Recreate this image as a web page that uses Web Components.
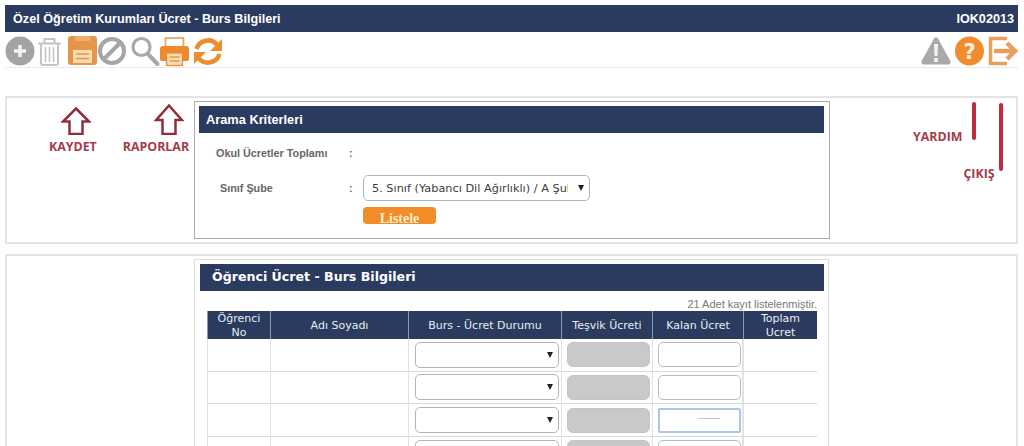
<!DOCTYPE html>
<html lang="tr">
<head>
<meta charset="utf-8">
<title>Özel Öğretim Kurumları Ücret - Burs Bilgileri</title>
<style>
  html, body { margin: 0; height: 446px; overflow: hidden; background: #fff; }
  body { padding: 5px 6px 0 5px; box-sizing: border-box; font-family: "Liberation Sans", Arial, sans-serif; }
</style>
</head>
<body>
<title-bar code="IOK02013">Özel Öğretim Kurumları Ücret - Burs Bilgileri</title-bar>
<tool-bar>
  <tool-icon name="plus"></tool-icon>
  <tool-icon name="trash" space="4"></tool-icon>
  <tool-icon name="save" space="7"></tool-icon>
  <tool-icon name="ban" space="1"></tool-icon>
  <tool-icon name="search" space="5"></tool-icon>
  <tool-icon name="print" space="1"></tool-icon>
  <tool-icon name="refresh" space="4"></tool-icon>
  <tool-icon name="warn" slot="end"></tool-icon>
  <tool-icon name="help" slot="end" space="4"></tool-icon>
  <tool-icon name="exit" slot="end" space="4"></tool-icon>
</tool-bar>
<criteria-panel></criteria-panel>
<fee-panel></fee-panel>

<script>
class TitleBar extends HTMLElement {
  constructor() {
    super();
    this.attachShadow({ mode: 'open' });
    this.shadowRoot.innerHTML = `
      <style>
        :host { display: flex; justify-content: space-between; align-items: center; height: 27px; padding: 0 4px 0 8px;
                background: #2a3b5f; color: #fff; font: bold 12.650px "Liberation Sans", Arial, sans-serif; }
      </style>
      <span><slot></slot></span>
      <span>${this.getAttribute('code')}</span>
    `;
  }
}
customElements.define('title-bar', TitleBar);

class ToolBar extends HTMLElement {
  constructor() {
    super();
    this.attachShadow({ mode: 'open' });
    this.shadowRoot.innerHTML = `
      <style>
        :host { display: flex; justify-content: space-between; align-items: flex-start; height: 31px; padding: 4px 1px 0 1px;
                border-bottom: 1px solid #e9e9e9; margin-bottom: 28px; }
        div { display: flex; }
      </style>
      <div><slot></slot></div>
      <div><slot name="end"></slot></div>
    `;
  }
}
customElements.define('tool-bar', ToolBar);

// width and inner drawing of each toolbar icon
const ICONS = {
  plus: [28, `<circle cx="14" cy="15" r="14.5" fill="#a3a3a3"/><path d="M14 9v12M8 15h12" stroke="#f2f2f2" stroke-width="3.5"/>`],
  trash: [23, `<g fill="none" stroke="#c4c4c4" stroke-width="2"><path d="M0 7.5h23M6.5 7V3h10v4M3 8v19a2 2 0 0 0 2 2h13a2 2 0 0 0 2-2V8"/><path d="M7.5 11v15M11.5 11v15M15.5 11v15" stroke-width="1.6"/></g>`],
  save: [29, `<rect y="0" width="29" height="29" rx="3" fill="#e59648"/><rect x="7" width="15" height="5" fill="#eeae6e"/><rect x="5" y="14" width="19" height="13" fill="#f8d9b0"/><path d="M8 18h13M8 22.500h13" stroke="#e59648" stroke-width="1.6"/>`],
  ban: [28, `<circle cx="14" cy="15" r="12" fill="none" stroke="#a6a6a6" stroke-width="4"/><path d="M6 23 22 7" stroke="#a6a6a6" stroke-width="4"/>`],
  search: [28, `<circle cx="10.500" cy="11" r="8.500" fill="none" stroke="#a8a8a8" stroke-width="3.200"/><path d="M17 18l9.500 10" stroke="#a8a8a8" stroke-width="4" stroke-linecap="round"/>`],
  print: [29, `<rect x="5.500" y="2" width="18" height="12" fill="#fff" stroke="#e8a868" stroke-width="1.800"/><path d="M3 10h23a3 3 0 0 1 3 3v10a2 2 0 0 1-2 2H2a2 2 0 0 1-2-2V13a3 3 0 0 1 3-3z" fill="#ee8a2e"/><rect x="6.500" y="17" width="16" height="12.500" fill="#f8d9b0" stroke="#ee8a2e" stroke-width="1.200"/><path d="M9.500 21h10M9.500 25h10" stroke="#e8994e" stroke-width="1.400"/>`],
  refresh: [30, `<g fill="none" stroke="#ef8c2e" stroke-width="4.500"><path d="M3.500 13A12 12 0 0 1 24 8.500"/><path d="M26.500 18A12 12 0 0 1 6 22.500"/></g><path d="M29 3v12H17zM1 28V16h12z" fill="#ef8c2e"/>`],
  warn: [30, `<path d="M15 4 27 26H3z" fill="#aaa" stroke="#aaa" stroke-width="5" stroke-linejoin="round"/><path d="M13 8h4l-.6 12h-2.800zM13.200 22h3.600v4h-3.600z" fill="#f4f4f4"/>`],
  help: [29, `<circle cx="14.500" cy="15" r="14.500" fill="#ef8c2e"/><text x="14.500" y="23" text-anchor="middle" fill="#fbeedd" font-family="DejaVu Sans, sans-serif" font-weight="bold" font-size="21">?</text>`],
  exit: [29, `<path d="M19 2.500H2.500v25H19" fill="none" stroke="#e6a05c" stroke-width="3.500"/><path d="M6 15h18" stroke="#e6a05c" stroke-width="4.500"/><path d="M19 7l8 8-8 8" fill="none" stroke="#e6a05c" stroke-width="4.500"/>`]
};

class ToolIcon extends HTMLElement {
  constructor() {
    super();
    this.attachShadow({ mode: 'open' });
    const [w, body] = ICONS[this.getAttribute('name')];
    const space = this.getAttribute('space') || 0;
    this.shadowRoot.innerHTML = `
      <style>
        :host { display: block; width: ${w}px; height: 30px; margin-left: ${space}px; }
        svg { display: block; overflow: visible; }
      </style>
      <svg width="${w}" height="30" viewBox="0 0 ${w} 30">${body}</svg>
    `;
  }
}
customElements.define('tool-icon', ToolIcon);

class NoteArrow extends HTMLElement {
  constructor() {
    super();
    this.attachShadow({ mode: 'open' });
    const top = this.getAttribute('top');
    const h = 135 - 98 - top;
    this.shadowRoot.innerHTML = `
      <style>
        :host { display: flex; flex-direction: column; align-items: center; padding-top: ${top}px;
                color: #a53c4a; font: bold 12.400px "Open Sans", sans-serif; line-height: 16px; }
        svg { display: block; margin: 0 0 4px ${this.getAttribute('shift')}px; }
      </style>
      <svg width="30" height="${h}" viewBox="0 0 30 ${h}">
        <path d="M15 1.500 28 ${h * .52}H21.500V${h - 1}H8.500V${h * .52}H2z" fill="#fff" stroke="#8f2f3c" stroke-width="2.500"/>
      </svg>
      <slot></slot>
    `;
  }
}
customElements.define('note-arrow', NoteArrow);

class NoteLine extends HTMLElement {
  constructor() {
    super();
    this.attachShadow({ mode: 'open' });
    const top = this.getAttribute('top');
    const len = this.getAttribute('len');
    this.shadowRoot.innerHTML = `
      <style>
        :host { display: flex; align-items: flex-end; padding-top: ${top}px; height: ${len}px;
                color: #a53c4a; font: bold 12.400px "Open Sans", sans-serif; line-height: 16px; }
        i { display: block; width: 4px; height: ${len}px; margin-left: ${this.getAttribute('space')}px;
            background: #bf2b3f; border-radius: 2px; }
        span { margin-bottom: ${this.getAttribute('drop')}px; }
      </style>
      <span><slot></slot></span><i></i>
    `;
  }
}
customElements.define('note-line', NoteLine);

class PageBox extends HTMLElement {
  constructor() {
    super();
    this.attachShadow({ mode: 'open' });
    this.shadowRoot.innerHTML = `
      <style>
        :host { display: flex; align-items: flex-start; border: 2px solid #e4e4e4; margin-bottom: 10px; }
      </style>
      <slot></slot>
    `;
  }
}
customElements.define('page-box', PageBox);

class NavyHead extends HTMLElement {
  constructor() {
    super();
    this.attachShadow({ mode: 'open' });
    this.shadowRoot.innerHTML = `
      <style>
        :host { display: block; height: 27px; padding-left: 7px; background: #2a3b5f; color: #fff;
                font: bold 12.800px/27px "Liberation Sans", Arial, sans-serif; }
        :host([wide]) { padding-left: 12px; font: bold 12.600px/25px "DejaVu Sans", sans-serif; }
      </style>
      <slot></slot>
    `;
  }
}
customElements.define('navy-head', NavyHead);

class FeeSelect extends HTMLElement {
  constructor() {
    super();
    this.attachShadow({ mode: 'open' });
    this.shadowRoot.innerHTML = `
      <style>
        :host { display: block; position: relative; }
        select { appearance: none; display: block; box-sizing: border-box; width: 100%; height: 100%; margin: 0; padding: 0 21px 0 8px;
                 background: #fff; border: 1px solid #a9b9bb; border-radius: 5px; outline: 0; color: #3c3c3c;
                 font: 11.300px "DejaVu Sans", sans-serif; }
        i { position: absolute; right: 6px; top: 50%; margin-top: -3px; border: 3.5px solid transparent;
            border-top: 6px solid #222; border-bottom: 0; }
      </style>
      <select></select><i></i>
    `;
    const v = this.getAttribute('value');
    if (v) this.shadowRoot.querySelector('select').innerHTML = `<option>${v}</option>`;
  }
}
customElements.define('fee-select', FeeSelect);

class CriteriaPanel extends HTMLElement {
  constructor() {
    super();
    this.attachShadow({ mode: 'open' });
    this.shadowRoot.innerHTML = `
      <style>
        :host { display: block; }
        .notes { display: flex; align-items: flex-start; gap: 26px; width: 145px; padding-left: 42px; }
        .side { display: flex; align-items: flex-start; padding-left: 83px; }
        .side note-line + note-line { margin-left: -13px; }
        .card { box-sizing: border-box; width: 636px; height: 138px; margin: 3px 0; padding: 4px 5px 0 4px; border: 1px solid #aaa; }
        .form { display: grid; grid-template-columns: 150px 14px 227px; grid-template-rows: 20px 26px 18px; row-gap: 12px;
                margin-top: 10px; align-items: center; color: #666; font: bold 10.800px "Liberation Sans", Arial, sans-serif; }
        .form .l1 { padding-left: 17px; }
        .form .l2 { padding-left: 21px; }
        .form .btn { grid-column: 3; align-self: start; margin-top: -6px; }
        fee-select { height: 26px; }
        button { display: block; box-sizing: border-box; width: 73px; height: 17px; padding: 6px 0 0; border: 0; border-radius: 4px;
                 background: #f28c28; color: #fdeccb; font: bold 14px/11px "Liberation Serif", serif; }
      </style>
      <page-box>
        <div class="notes">
          <note-arrow top="9" shift="6">KAYDET</note-arrow>
          <note-arrow top="6" shift="26">RAPORLAR</note-arrow>
        </div>
        <div class="card">
          <navy-head>Arama Kriterleri</navy-head>
          <div class="form">
            <span class="l1">Okul Ücretler Toplamı</span><span>:</span><span></span>
            <span class="l2">Sınıf Şube</span><span>:</span>
            <fee-select value="5. Sınıf (Yabancı Dil Ağırlıklı) / A Şubesi"></fee-select>
            <button class="btn">Listele</button>
          </div>
        </div>
        <div class="side">
          <note-line top="4" len="38" space="10" drop="-5">YARDIM</note-line>
          <note-line top="5" len="68" space="4" drop="-11">ÇIKIŞ</note-line>
        </div>
      </page-box>
    `;
  }
}
customElements.define('criteria-panel', CriteriaPanel);

class FeeTable extends HTMLElement {
  constructor() {
    super();
    this.attachShadow({ mode: 'open' });
    const heads = ['Öğrenci No', 'Adı Soyadı', 'Burs - Ücret Durumu', 'Teşvik Ücreti', 'Kalan Ücret', 'Toplam Ucret'];
    let rows = '';
    for (let i = 0; i < 4; i++) {
      rows += `
        <div class="c"></div><div class="c"></div>
        <div class="c s"><fee-select></fee-select></div>
        <div class="c i"><input disabled></div>
        <div class="c i ${i === 2 ? 'on' : ''}"><input>${i === 2 ? '<b></b>' : ''}</div>
        <div class="c"></div>`;
    }
    this.shadowRoot.innerHTML = `
      <style>
        :host { display: grid; height: 135px; overflow: hidden; grid-template-columns: 63px 138px 153px 91px 91px 74px; grid-template-rows: 28px; grid-auto-rows: 32.670px; }
        .h { display: flex; align-items: center; justify-content: center; box-sizing: border-box; padding: 1px 8px 0; background: #2a3b5f;
             border-left: 1px solid #8c98ad; color: #e8ecf2; text-align: center; font: 11px/14px "DejaVu Sans", sans-serif; }
        .h:first-child { border-left: 0; }
        .c { box-sizing: border-box; display: flex; align-items: center; border-left: 1px solid #e2e2e2; border-bottom: 1px solid #d8d8d8; position: relative; }
        .c:nth-child(6n) { border-right: 1px solid #e2e2e2; }
        .s { padding-left: 6px; }
        .s fee-select { width: 144px; height: 26px; }
        .i { padding-left: 5px; }
        input { box-sizing: border-box; width: 83px; height: 25px; margin: 0; padding: 0; background: #fff; border: 1px solid #b4bfc2; border-radius: 5px; outline: 0; }
        input:disabled { background: #c9c9c9; border-color: #c4c4c4; border-radius: 6px; }
        .on input { border: 2px solid #a9c6e6; border-radius: 2px; }
        .on b { position: absolute; left: 45px; top: 14px; width: 22px; height: 1px; background: #c6c6c6; }
      </style>
      ${heads.map(h => `<div class="h">${h}</div>`).join('')}
      ${rows}
    `;
  }
}
customElements.define('fee-table', FeeTable);

class FeePanel extends HTMLElement {
  constructor() {
    super();
    this.attachShadow({ mode: 'open' });
    this.shadowRoot.innerHTML = `
      <style>
        :host { display: block; }
        page-box { box-sizing: border-box; padding-left: 187px; height: 192px; margin: 0; border-bottom: 0; }
        .card { box-sizing: border-box; width: 635px; height: 187px; margin-top: 3px; padding: 4px 4px 0 5px; border: 1px solid #ddd; border-bottom: 0; }
        .count { width: 617px; height: 20px; line-height: 27px; text-align: right; color: #777; font-size: 11px; font-family: "Liberation Sans", Arial, sans-serif; }
        fee-table { margin-left: 7px; width: 610px; }
      </style>
      <page-box>
        <div class="card">
          <navy-head wide>Öğrenci Ücret - Burs Bilgileri</navy-head>
          <div class="count">21 Adet kayıt listelenmiştir.</div>
          <fee-table></fee-table>
        </div>
      </page-box>
    `;
  }
}
customElements.define('fee-panel', FeePanel);
</script>
</body>
</html>
